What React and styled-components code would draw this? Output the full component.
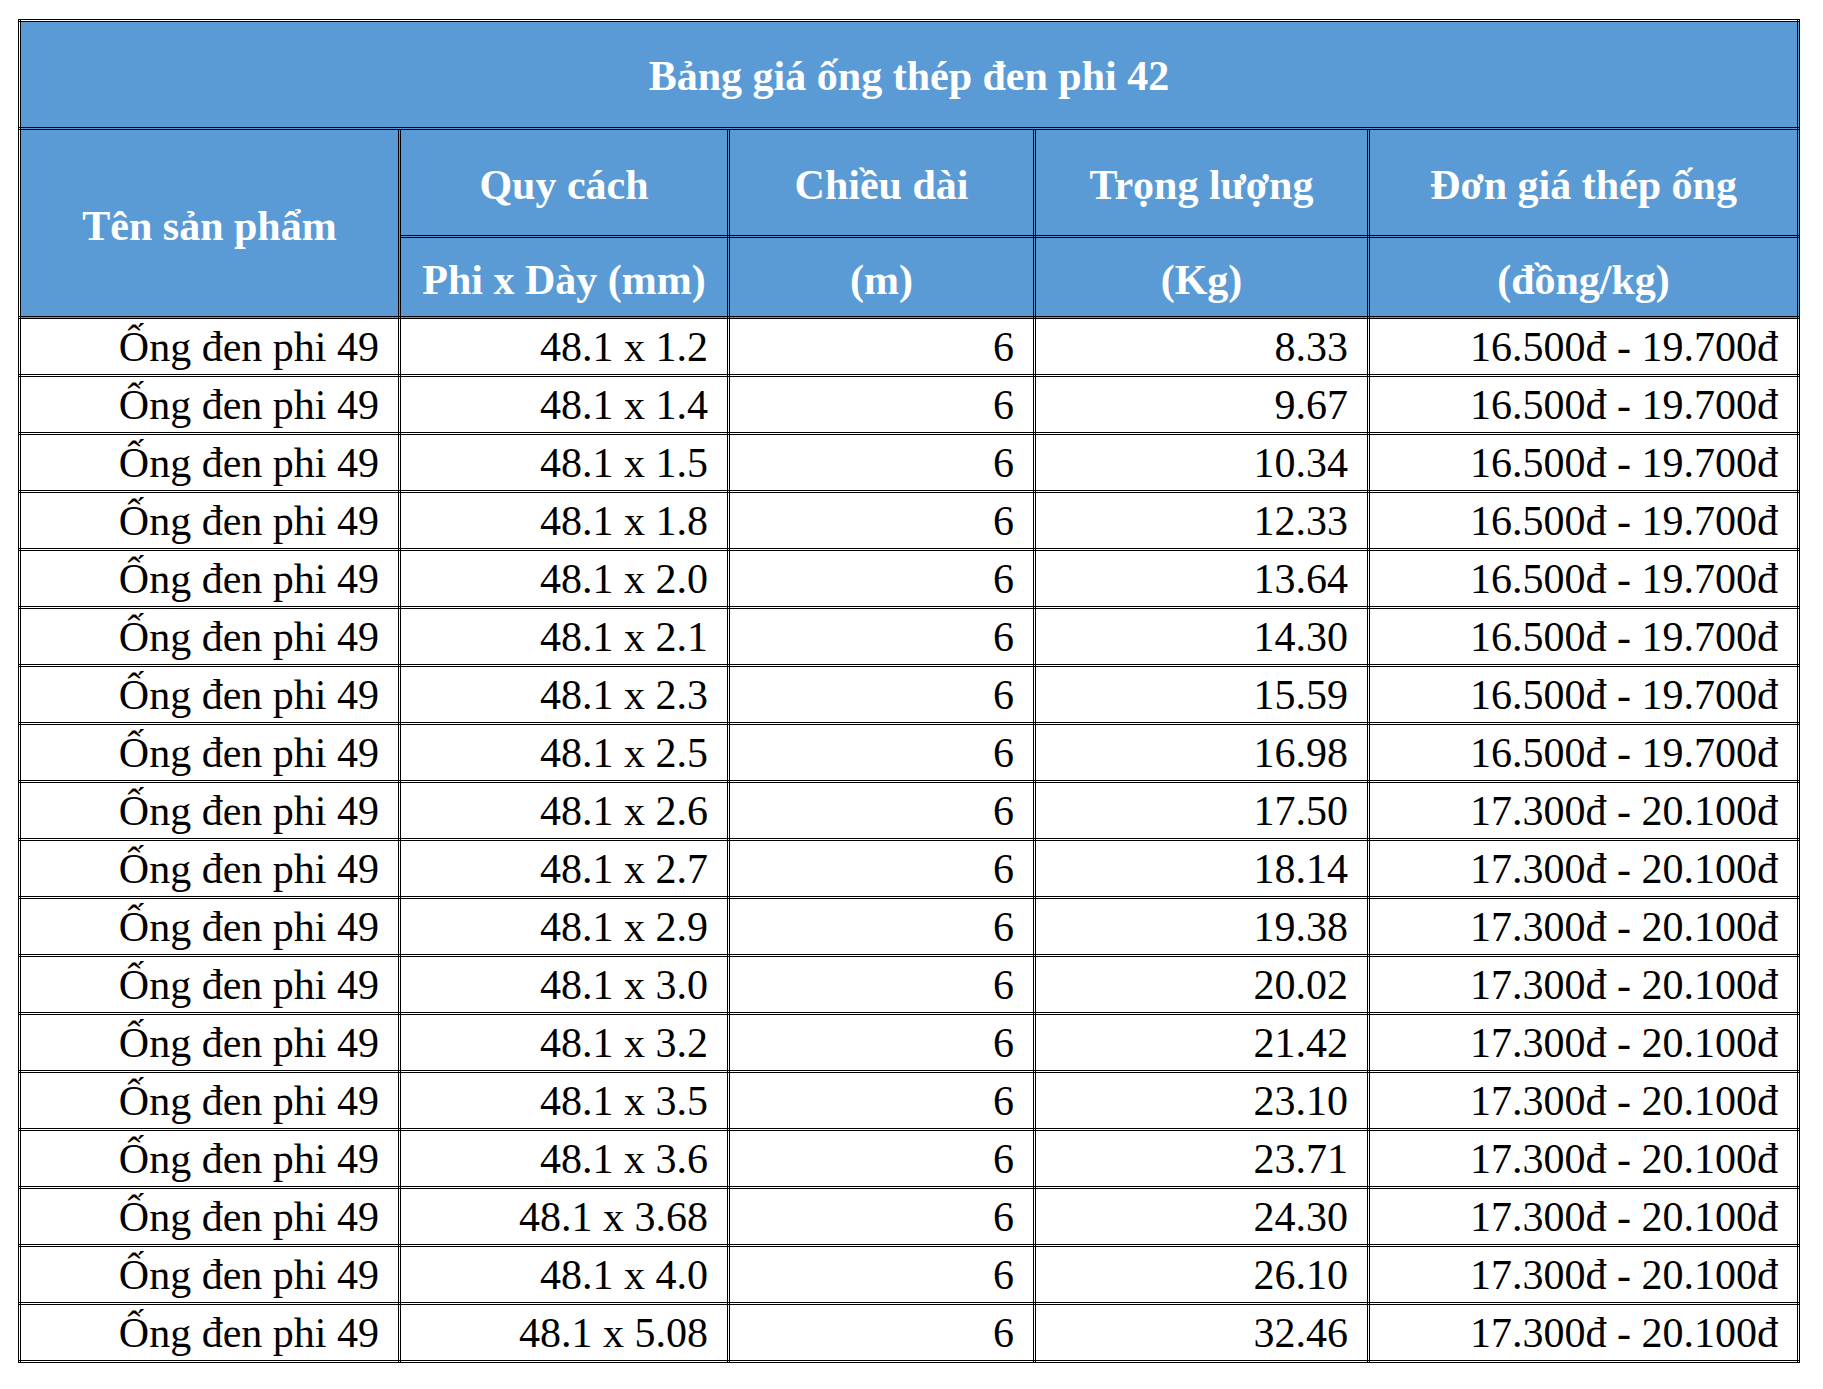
import React from 'react'
import styled, { createGlobalStyle } from 'styled-components'

const GlobalStyle = createGlobalStyle`
  html, body {
    margin: 0;
    padding: 0;
    background: #fff;
  }
`

const Page = styled.div`
  padding: 19px 0 0 18px;
`

const PriceTable = styled.table`
  width: 1782px;
  table-layout: fixed;
  border-collapse: collapse;
  border: 3px double #000;
  font-family: "Liberation Serif", "Times New Roman", serif;
`

const Row = styled.tr`
  height: ${p => p.$h}px;
`

const HeadCell = styled.th`
  background: #5b9bd5;
  color: #fff;
  font-size: 42px;
  font-weight: bold;
  text-align: center;
  vertical-align: middle;
  padding: ${p => (p.$title ? '2px' : '5px')} 4px 0;
  border: 3px double #000;
  white-space: nowrap;
`

const Cell = styled.td`
  background: #fff;
  color: #000;
  font-size: 42px;
  text-align: right;
  vertical-align: middle;
  padding: 0 19px 0 4px;
  border: 3px double #000;
  white-space: nowrap;
`

const LOW = '16.500đ - 19.700đ'
const HIGH = '17.300đ - 20.100đ'

const rows = [
  ['48.1 x 1.2', '8.33', LOW],
  ['48.1 x 1.4', '9.67', LOW],
  ['48.1 x 1.5', '10.34', LOW],
  ['48.1 x 1.8', '12.33', LOW],
  ['48.1 x 2.0', '13.64', LOW],
  ['48.1 x 2.1', '14.30', LOW],
  ['48.1 x 2.3', '15.59', LOW],
  ['48.1 x 2.5', '16.98', LOW],
  ['48.1 x 2.6', '17.50', HIGH],
  ['48.1 x 2.7', '18.14', HIGH],
  ['48.1 x 2.9', '19.38', HIGH],
  ['48.1 x 3.0', '20.02', HIGH],
  ['48.1 x 3.2', '21.42', HIGH],
  ['48.1 x 3.5', '23.10', HIGH],
  ['48.1 x 3.6', '23.71', HIGH],
  ['48.1 x 3.68', '24.30', HIGH],
  ['48.1 x 4.0', '26.10', HIGH],
  ['48.1 x 5.08', '32.46', HIGH],
]

const App = () => (
  <>
    <GlobalStyle />
    <Page>
      <PriceTable>
        <colgroup>
          <col style={{ width: 380 }} />
          <col style={{ width: 329 }} />
          <col style={{ width: 306 }} />
          <col style={{ width: 334 }} />
          <col style={{ width: 430 }} />
        </colgroup>
        <thead>
          <Row $h={108}>
            <HeadCell colSpan={5} $title>
              Bảng giá ống thép đen phi 42
            </HeadCell>
          </Row>
          <Row $h={108}>
            <HeadCell rowSpan={2}>Tên sản phẩm</HeadCell>
            <HeadCell>Quy cách</HeadCell>
            <HeadCell>Chiều dài</HeadCell>
            <HeadCell>Trọng lượng</HeadCell>
            <HeadCell>Đơn giá thép ống</HeadCell>
          </Row>
          <Row $h={81}>
            <HeadCell>Phi x Dày (mm)</HeadCell>
            <HeadCell>(m)</HeadCell>
            <HeadCell>(Kg)</HeadCell>
            <HeadCell>(đồng/kg)</HeadCell>
          </Row>
        </thead>
        <tbody>
          {rows.map(([size, weight, price], i) => (
            <Row $h={58} key={i}>
              <Cell>Ống đen phi 49</Cell>
              <Cell>{size}</Cell>
              <Cell>6</Cell>
              <Cell>{weight}</Cell>
              <Cell>{price}</Cell>
            </Row>
          ))}
        </tbody>
      </PriceTable>
    </Page>
  </>
)

export default App
